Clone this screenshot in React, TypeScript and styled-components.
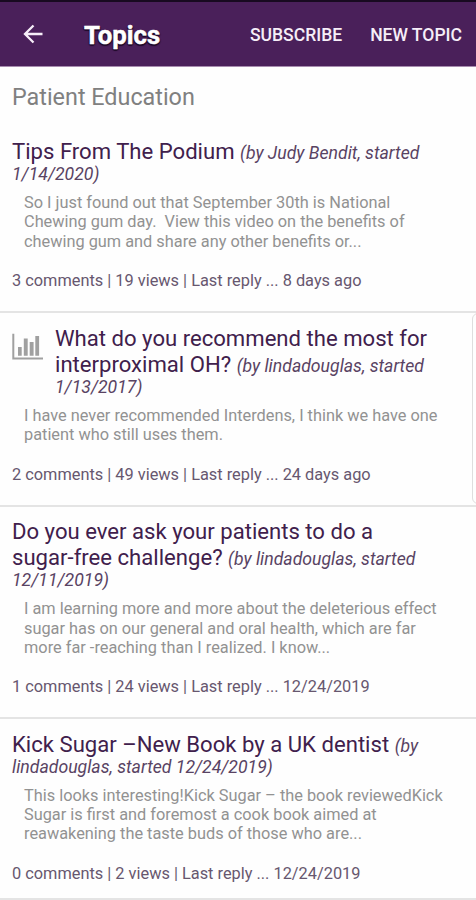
import React from 'react';
import styled, { createGlobalStyle } from 'styled-components';

const GlobalStyle = createGlobalStyle`
  * { box-sizing: border-box; }
  body { margin: 0; background: #fefefe; font-family: Roboto, 'Liberation Sans', sans-serif; }
`;

const Screen = styled.div`
  width: 476px;
  height: 900px;
  overflow: hidden;
  display: flex;
  flex-direction: column;
  position: relative;
`;

const Toolbar = styled.header`
  flex: none;
  display: flex;
  align-items: center;
  height: 67px;
  padding: 2px 14px 0 22px;
  border-top: 2px solid #180a20;
  border-bottom: 1px solid #a78caf;
  background: #4a205a;
  color: #fff;
`;

const BackIcon = styled.svg`
  width: 22px;
  height: 22px;
  margin-right: 40px;
  margin-top: -2px;
`;

const Heading = styled.h1`
  flex: 1;
  margin: 0;
  font-size: 25.7px;
  font-weight: 700;
  line-height: 30px;
  -webkit-text-stroke: 0.5px #fff;
  text-shadow: 1px 1px 1px #210b2b, -1px 1px 1px #210b2b, 0 2px 1px #210b2b;
`;

const Action = styled.button`
  padding: 0;
  margin-left: 28px;
  border: 0;
  background: none;
  color: #f6eef8;
  font: 500 17.55px/22px Roboto, sans-serif;
  white-space: nowrap;
`;

const SectionTitle = styled.h2`
  flex: none;
  margin: 0;
  padding: 16px 12px 0 12px;
  height: 71px;
  font-size: 23.35px;
  line-height: 28px;
  font-weight: 400;
  color: #808080;
`;

const TopicItem = styled.article<{ $last?: boolean }>`
  flex: none;
  padding: 0 12px ${p => (p.$last ? 14 : 20)}px;
  border-bottom: 2px solid #e4e4e4;
  & + & { padding-top: 11.3px; }
`;

const TopicHead = styled.div`
  display: flex;
`;

const PollIcon = styled.svg`
  flex: none;
  width: 31px;
  height: 28px;
  margin: 8px 12px 0 0;
`;

const TopicTitle = styled.h3`
  margin: 0;
  font-size: 22.12px;
  font-weight: 400;
  color: #40204c;
  white-space: nowrap;
`;

const TitleLine = styled.div`
  height: 26px;
  line-height: 26px;
`;

const Byline = styled.em`
  font-size: 17.65px;
  line-height: 1;
  color: #594363;
`;

const BylineRest = styled(Byline)`
  display: block;
  line-height: 20px;
`;

const Excerpt = styled.p`
  margin: 9.4px 0 20.6px 12px;
  font-size: 16.33px;
  line-height: 19.1px;
  color: #929292;
  white-space: pre;
`;

const Meta = styled.div`
  font-size: 16.35px;
  line-height: 20px;
  color: #67576f;
  white-space: nowrap;
`;

const ScrollEdge = styled.div`
  position: absolute;
  left: 472px;
  top: 313px;
  width: 14px;
  height: 191px;
  border: 1px solid #dedede;
  border-radius: 6px;
`;

interface Topic {
  title: string[];
  by: string;
  byRest: string;
  excerpt: string[];
  meta: string;
  poll?: boolean;
}

const topics: Topic[] = [
  {
    title: ['Tips From The Podium'],
    by: '(by Judy Bendit, started',
    byRest: '1/14/2020)',
    excerpt: [
      'So I just found out that September 30th is National',
      'Chewing gum day.  View this video on the benefits of',
      'chewing gum and share any other benefits or...',
    ],
    meta: '3 comments | 19 views | Last reply ... 8 days ago',
  },
  {
    title: ['What do you recommend the most for', 'interproximal OH?'],
    by: '(by lindadouglas, started',
    byRest: '1/13/2017)',
    excerpt: ['I have never recommended Interdens, I think we have one', 'patient who still uses them.'],
    meta: '2 comments | 49 views | Last reply ... 24 days ago',
    poll: true,
  },
  {
    title: ['Do you ever ask your patients to do a', 'sugar-free challenge?'],
    by: '(by lindadouglas, started',
    byRest: '12/11/2019)',
    excerpt: [
      'I am learning more and more about the deleterious effect',
      'sugar has on our general and oral health, which are far',
      'more far -reaching than I realized. I know...',
    ],
    meta: '1 comments | 24 views | Last reply ... 12/24/2019',
  },
  {
    title: ['Kick Sugar –New Book by a UK dentist'],
    by: '(by',
    byRest: 'lindadouglas, started 12/24/2019)',
    excerpt: [
      'This looks interesting!Kick Sugar – the book reviewedKick',
      'Sugar is first and foremost a cook book aimed at',
      'reawakening the taste buds of those who are...',
    ],
    meta: '0 comments | 2 views | Last reply ... 12/24/2019',
  },
];

export default function App() {
  return (
    <Screen>
      <GlobalStyle />
      <Toolbar>
        <BackIcon viewBox="0 0 22 22" fill="none" stroke="#f6eef8" strokeWidth="2.3">
          <path d="M20.5 11H3M11.5 2.5L3 11l8.5 8.5" />
        </BackIcon>
        <Heading>Topics</Heading>
        <Action>SUBSCRIBE</Action>
        <Action>NEW TOPIC</Action>
      </Toolbar>
      <SectionTitle>Patient Education</SectionTitle>
      {topics.map((t, i) => (
        <TopicItem key={t.meta} $last={i === topics.length - 1}>
          <TopicHead>
            {t.poll && (
              <PollIcon viewBox="0 0 31 28" fill="#a0a0a0">
                <path d="M0.3 0.7h2v23.7H31v2H0.3z" />
                <path d="M6 14h3.7v8.7H6zM11.8 5.5h3.9v17.2h-3.9zM17.7 9h3.9v13.7h-3.9zM23.3 3h3.8v19.7h-3.8z" />
              </PollIcon>
            )}
            <TopicTitle>
              {t.title.map((line, n) => (
                <TitleLine key={line}>
                  {line}
                  {n === t.title.length - 1 && <> <Byline>{t.by}</Byline></>}
                </TitleLine>
              ))}
              <BylineRest>{t.byRest}</BylineRest>
            </TopicTitle>
          </TopicHead>
          <Excerpt>{t.excerpt.join('\n')}</Excerpt>
          <Meta>{t.meta}</Meta>
        </TopicItem>
      ))}
      <ScrollEdge />
    </Screen>
  );
}
